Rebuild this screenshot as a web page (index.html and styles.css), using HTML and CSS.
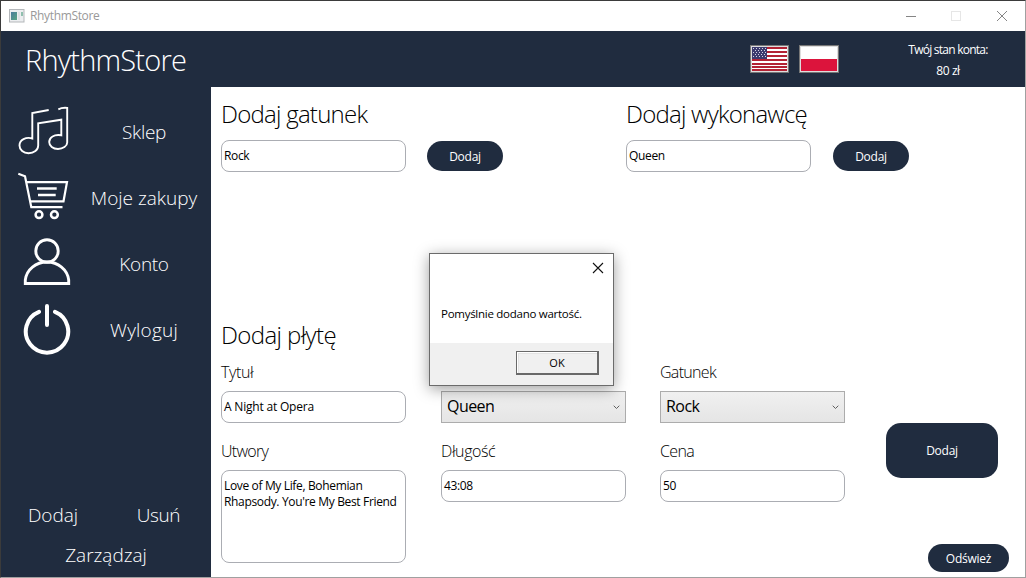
FILE: index.html
```html
<!DOCTYPE html>
<html lang="pl">
<head>
<meta charset="utf-8">
<title>RhythmStore</title>
<link rel="stylesheet" href="styles.css">
</head>
<body>
<div class="window">
  <div class="titlebar">
    <svg class="app-icon" width="16" height="14" viewBox="0 0 16 14"><defs><linearGradient id="pane" x1="0" y1="0" x2="1" y2="1"><stop offset="0" stop-color="#4a7c9c"/><stop offset="1" stop-color="#5aa583"/></linearGradient></defs><rect x=".5" y=".5" width="14.5" height="12.5" fill="#eceef0" stroke="#b4b7ba"/><rect x="2" y="3" width="6" height="8" fill="url(#pane)"/><rect x="9" y="3" width="2" height="8" fill="#dfe1e4"/><rect x="12" y="3" width="2" height="4" fill="#8fbfae"/></svg>
    <span class="app-name">RhythmStore</span>
    <svg class="caption" width="104" height="12" viewBox="0 0 104 12" fill="none"><path d="M0 6.500H10" stroke="#858585"/><rect x="45.500" y="1.500" width="9" height="9" stroke="#e6e6e6"/><path d="M91 1L101 11M101 1L91 11" stroke="#858585"/></svg>
  </div>
  <header class="header">
    <h1 class="brand">RhythmStore</h1>
    <div class="flags">
      <button class="flag"><svg width="35" height="24" viewBox="0 0 35 24" shape-rendering="crispEdges"><rect width="35" height="24" fill="#fff"/><path d="M0 1H35M0 5H35M0 9H35M0 13H35M0 16.500H35M0 19.500H35M0 23H35" stroke="#b22234" stroke-width="2"/><rect width="15" height="12" fill="#3c3b6e"/><path d="M1 1.500H15M3 3.500H15M1 5.500H15M3 7.500H15M1 9.500H15" stroke="#d4d4e2" stroke-dasharray="1 2"/></svg></button>
      <button class="flag"><svg width="36" height="24" viewBox="0 0 36 24"><rect width="36" height="24" fill="#fff"/><rect y="12" width="36" height="12" fill="#dc143c"/></svg></button>
    </div>
    <div class="balance"><span class="balance-label">Twój stan konta:</span><span>80 zł</span></div>
  </header>
  <div class="body">
    <nav class="sidebar">
      <a class="nav-item"><svg width="54" height="54" viewBox="18 105 54 54" fill="none" stroke="#fff" stroke-width="1.900"><path d="M48.700 110L32.300 113V138.500C26 136.500 19.500 140 19.500 145.500C19.500 150 23.500 153.200 28.500 153.200C34 153.200 38.200 150 38.200 145.500V123.400L61.300 119.700V135.300C54 134 49.200 137.500 49.200 142C49.200 146 53 149 58 149C63 149 67.200 146 67.200 142.500V107.900Q62 107.400 58.300 109.300"/></svg><span class="nav-text">Sklep</span></a>
      <a class="nav-item"><svg width="54" height="54" viewBox="18 171 54 54" fill="none" stroke="#fff" stroke-width="2.200"><path d="M18.300 173.700L25 176.300L31.300 207.200H62.500M26.700 182.200H67L63.500 201.300H30.500"/><path d="M37 188.500H56.700M38 195H55.700" stroke-width="2.400"/><circle cx="39" cy="214.700" r="3.400" stroke-width="2.500"/><circle cx="54.400" cy="214.700" r="3.400" stroke-width="2.500"/></svg><span class="nav-text t-zakupy">Moje zakupy</span></a>
      <a class="nav-item"><svg width="54" height="54" viewBox="18 237 54 54" fill="none" stroke="#fff" stroke-width="2.900"><circle cx="47" cy="251" r="11.200"/><path d="M25.300 283.500V280C26.500 269.500 36 262 47 262S67.500 269.500 68.700 280V283.500Z"/></svg><span class="nav-text">Konto</span></a>
      <a class="nav-item"><svg width="54" height="54" viewBox="18 303 54 54" fill="none" stroke="#fff" stroke-width="4" stroke-linecap="round"><path d="M39 311.800A21.200 21.200 0 1 0 55 311.800M47 306V325"/></svg><span class="nav-text t-wyloguj">Wyloguj</span></a>
      <div class="admin"><div class="admin-row"><a class="nav-text t-dodaj">Dodaj</a><a class="nav-text t-usun">Usuń</a></div><a class="nav-text t-zarz">Zarządzaj</a></div>
    </nav>
    <main class="content">
      <div class="top-forms">
        <section><h2 class="h-gatunek">Dodaj gatunek</h2><div class="inline-form"><div class="input">Rock</div><button class="btn pill">Dodaj</button></div></section>
        <section><h2 class="h-wykonawce">Dodaj wykonawcę</h2><div class="inline-form"><div class="input">Queen</div><button class="btn pill">Dodaj</button></div></section>
      </div>
      <h2>Dodaj płytę</h2>
      <div class="album">
        <div class="field"><label>Tytuł</label><div class="input title-input">A Night at Opera</div></div>
        <div class="field"><label>Wykonawca</label><div class="select"><span>Queen</span><svg width="7" height="5" viewBox="0 0 7 5" fill="none" stroke="#606060"><path d="M.7 .7L3.500 3.500L6.300 .7"/></svg></div></div>
        <div class="field"><label class="l-gatunek">Gatunek</label><div class="select"><span>Rock</span><svg width="7" height="5" viewBox="0 0 7 5" fill="none" stroke="#606060"><path d="M.7 .7L3.500 3.500L6.300 .7"/></svg></div></div>
        <button class="btn big">Dodaj</button>
        <div class="field"><label class="l-utwory">Utwory</label><div class="input area">Love of My Life, Bohemian<br><span class="song-b">Rhapsody. You're My Best Friend</span></div></div>
        <div class="field"><label>Długość</label><div class="input">43:08</div></div>
        <div class="field"><label class="l-cena">Cena</label><div class="input">50</div></div>
        <button class="btn refresh">Odśwież</button>
      </div>
    </main>
  </div>
</div>
<div class="dialog">
  <div class="dialog-top"><svg width="12" height="12" viewBox="0 0 12 12" stroke="#111" stroke-width="1.100"><path d="M1 1L11 11M11 1L1 11"/></svg></div>
  <p class="message">Pomyślnie dodano wartość.</p>
  <div class="dialog-foot"><button class="ok">OK</button></div>
</div>
</body>
</html>
```
FILE: styles.css
```css
* { box-sizing: border-box; }
body { margin: 0; width: 1026px; height: 578px; overflow: hidden; font-family: "Open Sans", "Noto Sans", sans-serif; font-size: 12px; color: #000; }
h1, h2, p { margin: 0; font-weight: 300; }
button { font: inherit; padding: 0; border: 0; }
svg { display: block; flex: none; }
span, a, label, h2, h1 { white-space: nowrap; }

.window { width: 1026px; height: 578px; border: 1px solid #3b3b3b; border-right-color: #a0a0a0; border-bottom-color: #a0a0a0; display: flex; flex-direction: column; background: #fff; }
.titlebar { height: 30px; flex: none; display: flex; align-items: center; padding: 0 15px 0 8px; color: #999; }
.app-name { margin: -1px 0 0 5px; letter-spacing: -.35px; }
.caption { margin: -1px 0 0 auto; }

.header { height: 56px; flex: none; display: flex; background: #202c3f; color: #fff; }
.brand { width: 749px; padding-left: 24px; font-size: 29px; line-height: 58px; letter-spacing: -.8px; }
.flags { display: flex; gap: 10px; padding-top: 14px; width: 130px; }
.flag { height: 28px; padding: 1px; border: 1px solid #777; background: #ddd; }
.balance { width: 136px; display: flex; flex-direction: column; align-items: center; padding-top: 8px; line-height: 21px; letter-spacing: -.4px; }
.balance-label { letter-spacing: -.75px; }

.body { flex: 1; display: flex; min-height: 0; }
.sidebar { width: 210px; background: #202c3f; color: #fff; padding-top: 12px; display: flex; flex-direction: column; }
.nav-item { height: 66px; display: grid; grid-template-columns: 54px 1fr; align-items: center; padding-left: 17px; }
.nav-item .nav-text { justify-self: center; margin-left: 5px; }
.nav-text { font-size: 19px; font-weight: 300; line-height: 28px; letter-spacing: -.3px; }
.nav-text.t-zakupy { letter-spacing: 0; }
.nav-text.t-wyloguj { letter-spacing: .2px; }
.t-zarz { letter-spacing: 0; }
.admin { margin-top: auto; padding-bottom: 8px; display: flex; flex-direction: column; align-items: center; gap: 12px; }
.admin-row { display: flex; justify-content: space-between; width: 100%; padding: 0 31px 0 27px; }
.t-dodaj { letter-spacing: -.05px; }
.t-usun { letter-spacing: -.45px; }

.content { flex: 1; padding: 10px 0 0 10px; }
.top-forms { display: grid; grid-template-columns: 405px 1fr; height: 221px; }
h2 { font-size: 24px; line-height: 34px; letter-spacing: -.6px; }
.h-gatunek { letter-spacing: -.75px; }
.h-wykonawce { letter-spacing: -.77px; }
.inline-form { display: flex; align-items: center; gap: 21px; margin-top: 9px; }
.top-forms section + section .inline-form { gap: 22px; }
.input { width: 185px; height: 32px; border: 1px solid #abadb3; border-radius: 8px; padding: 0 2px; line-height: 30px; background: #fff; letter-spacing: -.35px; }
.title-input { letter-spacing: -.2px; }
.btn { background: #202c3f; color: #fff; letter-spacing: -.25px; }
.pill { width: 76px; height: 30px; border-radius: 15px; }
.album { display: grid; grid-template-columns: 220px 219px 226px 123px; grid-template-rows: 79px 130px; margin-top: 8px; }
.field { display: flex; flex-direction: column; }
label { font-size: 16px; font-weight: 300; line-height: 24px; margin-bottom: 7px; letter-spacing: -.4px; }
.l-gatunek, .l-utwory { letter-spacing: -.7px; }
.l-cena { letter-spacing: -.6px; }
.field label { height: 24px; flex: none; }
.field .input { flex: none; }
.input.area { height: 93px; line-height: 16px; padding-top: 7px; }
.song-b { letter-spacing: -.34px; }
.select { width: 185px; height: 32px; border: 1px solid #acacac; background: linear-gradient(#f0f0f0, #e5e5e5); display: flex; align-items: center; justify-content: space-between; padding: 0 5px; font-size: 16px; line-height: 28px; letter-spacing: -.55px; }
.select span { margin-top: -3px; }
.big { width: 112px; height: 55px; border-radius: 15px; margin-top: 63px; }
.refresh { width: 81px; height: 28px; border-radius: 14px; margin: 105px 0 0 42px; }

.dialog { position: absolute; left: 429px; top: 253px; width: 185px; height: 133px; border: 1px solid #6b6b6b; background: #fff; box-shadow: 0 3px 14px rgba(0, 0, 0, .38); display: flex; flex-direction: column; }
.dialog-top { display: flex; justify-content: flex-end; padding: 8px 9px 0; }
.message { margin: 31px 0 0 11px; line-height: 18px; font-size: 11.500px; letter-spacing: -.27px; font-weight: 400; white-space: nowrap; }
.dialog-foot { margin-top: auto; height: 42px; background: #f0f0f0; padding: 8px 14px 0; display: flex; justify-content: flex-end; }
.ok { width: 83px; height: 24px; background: #f0f0f0; border: 1px solid #696969; border-right-width: 2px; border-bottom-width: 2px; box-shadow: inset 1px 1px #fff, inset 2px 2px #e3e3e3; line-height: 21px; font-size: 11px; }
```
